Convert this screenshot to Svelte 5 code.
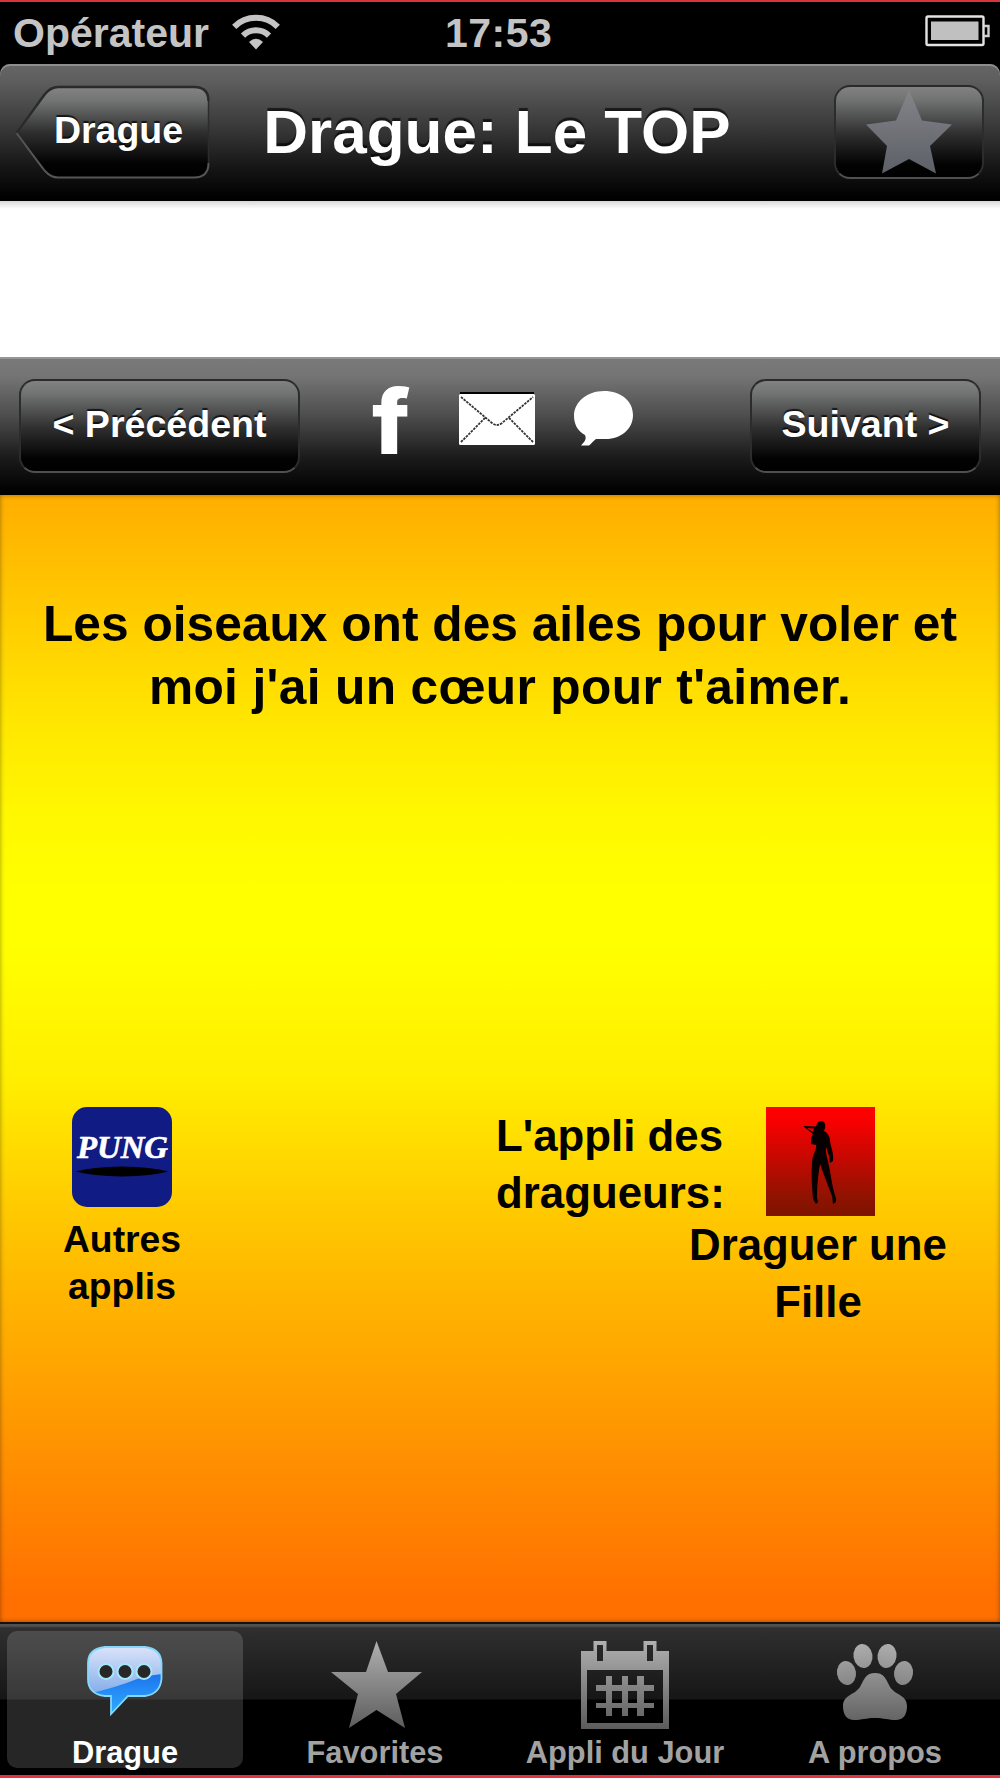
<script lang="ts">
	type Tab = { id: string; label: string };

	const tabs: Tab[] = [
		{ id: 'drague', label: 'Drague' },
		{ id: 'favorites', label: 'Favorites' },
		{ id: 'jour', label: 'Appli du Jour' },
		{ id: 'propos', label: 'A propos' }
	];

	let active = $state('drague');
</script>

<div class="phone">
	<div class="status">
		<span class="carrier">Opérateur</span>
		<svg class="wifi" width="50" height="38" viewBox="0 0 50 38">
			<g fill="none" stroke="#c4c4c4" stroke-width="6">
				<path d="M3.2 13.8 A31 31 0 0 1 46.8 13.8" />
				<path d="M12 22.6 A18.5 18.5 0 0 1 38 22.6" />
			</g>
			<path d="M18 29 Q25 22.500 32 29 L25 36.500 Z" fill="#c4c4c4" />
		</svg>
		<span class="time">17:53</span>
		<svg class="battery" width="66" height="32" viewBox="0 0 66 32">
			<rect x="1.500" y="1.500" width="57" height="28.500" rx="1.500" fill="none" stroke="#e4e4e4" stroke-width="2.400" />
			<path d="M59 11 H63.500 V21 H59" fill="none" stroke="#cfcfcf" stroke-width="2.400" />
			<rect x="6" y="6.500" width="47.500" height="18.500" fill="#c0c0c0" />
		</svg>
	</div>

	<header class="navbar">
		<button type="button" class="back">
			<svg width="195" height="95" viewBox="0 0 195 95">
				<defs>
					<linearGradient id="backFill" x1="0" y1="0" x2="0" y2="1">
						<stop offset="0" stop-color="#848484" />
						<stop offset="0.16" stop-color="#717272" />
						<stop offset="0.5" stop-color="#2f2f2f" />
						<stop offset="0.85" stop-color="#020202" />
						<stop offset="1" stop-color="#000" />
					</linearGradient>
					<linearGradient id="backEdge" x1="0" y1="0" x2="0" y2="1">
						<stop offset="0" stop-color="#2a2a2a" />
						<stop offset="0.5" stop-color="#242424" />
						<stop offset="0.56" stop-color="#444" />
						<stop offset="1" stop-color="#555" />
					</linearGradient>
				</defs>
				<path
					d="M1.500 48 C12 34 24 17 30 9 Q36 2 43 2 H179 Q193.500 2 193.500 16 V78 Q193.500 92.500 179 92.500 H43 Q36 92.500 30 86 C23 77 12 62 1.500 48 Z"
					fill="url(#backFill)"
				/>
				<path
					d="M1.500 48 C12 34 24 17 30 9 Q36 2 43 2 H179 Q193.500 2 193.500 16"
					fill="none"
					stroke="#2a2a2a"
					stroke-width="2.500"
				/>
				<path d="M193.500 16 V78" stroke="#2c2c2c" stroke-width="1.500" />
				<path
					d="M193.500 78 Q193.500 92.500 179 92.500 H43 Q36 92.500 30 86 C23 77 12 62 1.500 48"
					fill="none"
					stroke="#555"
					stroke-width="2"
				/>
			</svg>
			<span>Drague</span>
		</button>
		<h1>Drague: Le TOP</h1>
		<button type="button" class="btn star" aria-label="Favori">
			<svg width="88" height="86" viewBox="0 0 88 86">
				<defs>
					<linearGradient id="greyStar" x1="0" y1="0" x2="0" y2="1">
						<stop offset="0" stop-color="#838589" />
						<stop offset="1" stop-color="#5c5f66" />
					</linearGradient>
				</defs>
				<path d="M44 1 L57 31.500 L87 35.500 L65 57 L71 84.500 L44 70 L17 84.500 L22 57 L1 35.500 L31 31.500 Z" fill="url(#greyStar)" />
			</svg>
		</button>
	</header>

	<div class="ad"></div>

	<div class="toolbar">
		<button type="button" class="btn prev">&lt; Précédent</button>
		<div class="share">
			<svg class="facebook" width="40" height="110" viewBox="0 0 40 110">
				<text class="fb" x="1" y="97" textLength="38" lengthAdjust="spacingAndGlyphs">f</text>
			</svg>
			<svg class="mail" width="78" height="54" viewBox="0 0 78 54">
				<path d="M2 1 H76" stroke="#000" stroke-width="2" />
				<rect x="1" y="2" width="76" height="51" rx="1.500" fill="#fff" />
				<path
					d="M3 5 L34 31 Q39 35 44 31 L75 5 M3 50 L27 26 M75 50 L51 26"
					fill="none"
					stroke="#333"
					stroke-width="1.800"
					stroke-dasharray="2.500 1"
				/>
			</svg>
			<svg class="bubble" width="62" height="60" viewBox="0 0 62 60">
				<path
					d="M31 2 C48 2 60 12 60 26 C60 40 48 50 33 50 L23 50 C20 52 18 55 16 56.500 H8 C11 53 14 51 12 46 C4 42 1 34 1 27 C1 13 14 2 31 2 Z"
					fill="#fff"
				/>
			</svg>
		</div>
		<button type="button" class="btn next">Suivant &gt;</button>
	</div>

	<main>
		<p class="quote">
			Les oiseaux ont des ailes pour voler et<br /><span>moi j'ai un cœur pour t'aimer.</span>
		</p>

		<section class="promos">
			<div class="others">
				<svg width="100" height="100" viewBox="0 0 100 100">
					<rect width="100" height="100" rx="15" fill="#101c84" />
					<text class="pung" x="5" y="51" textLength="91" lengthAdjust="spacingAndGlyphs">PUNG</text>
					<path d="M4 64.500 Q20 60 50 59.500 Q80 60 96 64.500 Q80 69 50 69.500 Q20 69 4 64.500 Z" fill="#000" />
				</svg>
				<p>Autres<br />applis</p>
			</div>

			<div class="featured">
				<div class="row">
					<p>L'appli des<br />dragueurs:</p>
					<svg width="109" height="109" viewBox="0 0 109 109">
						<defs>
							<linearGradient id="redTile" x1="0" y1="0" x2="0" y2="1">
								<stop offset="0.08" stop-color="#f00" />
								<stop offset="0.45" stop-color="#c80800" />
								<stop offset="0.8" stop-color="#931200" />
								<stop offset="1" stop-color="#7d1200" />
							</linearGradient>
						</defs>
						<rect width="109" height="109" fill="url(#redTile)" />
						<path
							d="M37 19 L50 19.500 C51 15 54 13.500 56 14 C60 15 60 20 58 24 C62 26 64 30 64 34 C65 41 68 46 67 54 L64 56 L63 49 L60 40 C59 46 62 52 63 59 C65 68 66 80 70 91 L70 95 L67 97 L66 89 C62 78 57 66 54 57 C52 68 51 80 51 90 L52 95 L50 97 L47 92 C46 80 45 68 46 56 C46 48 51 43 50 38 L45 37 L45 31 L47 27 Z M41 21 L47 25 L48 21.500 Z"
							fill="#080000"
							fill-rule="evenodd"
						/>
					</svg>
				</div>
				<p class="caption">Draguer une<br />Fille</p>
			</div>
		</section>
	</main>

	<nav class="tabbar">
		{#each tabs as tab (tab.id)}
			<button type="button" class="tab" class:active={active === tab.id} onclick={() => (active = tab.id)}>
				<svg width="100" height="98" viewBox="0 0 100 98">
					<defs>
						<linearGradient id="tabGrey" gradientUnits="userSpaceOnUse" x1="0" y1="8" x2="0" y2="96">
							<stop offset="0" stop-color="#b0b0b0" />
							<stop offset="1" stop-color="#5c5c5c" />
						</linearGradient>
						<linearGradient id="chatTop" x1="0" y1="0" x2="0" y2="1">
							<stop offset="0" stop-color="#dce4fa" />
							<stop offset="0.65" stop-color="#88b0ea" />
							<stop offset="1" stop-color="#78b4ee" />
						</linearGradient>
						<linearGradient id="chatLow" x1="0" y1="0" x2="0" y2="1">
							<stop offset="0" stop-color="#1d74ee" />
							<stop offset="1" stop-color="#30b0ff" />
						</linearGradient>
						<clipPath id="chatClip">
							<path d="M18 14 H58 Q74 16 74.500 30 V46 Q73 61 58 63 H41 L24 81 V63 H18 Q1 61 1 46 V30 Q1 16 18 14 Z" />
						</clipPath>
					</defs>
					{#if tab.id === 'drague'}
						<g transform="translate(12)">
							<g clip-path="url(#chatClip)">
								<rect y="13" width="76" height="70" fill="url(#chatTop)" />
								<path d="M0 61 Q28 55 50 46 Q62 42 76 41 V84 H0 Z" fill="url(#chatLow)" />
							</g>
							<path
								d="M18 14 H58 Q74 16 74.500 30 V46 Q73 61 58 63 H41 L24 81 V63 H18 Q1 61 1 46 V30 Q1 16 18 14 Z"
								fill="none"
								stroke="#84d8fb"
								stroke-width="1.800"
							/>
							<g fill="#272727" stroke="#a5e6fb" stroke-width="2">
								<circle cx="19" cy="38.500" r="7.500" />
								<circle cx="38" cy="38.500" r="7.500" />
								<circle cx="57" cy="38.500" r="7.500" />
							</g>
						</g>
					{:else if tab.id === 'favorites'}
						<path
							d="M51.500 8 L63 39 H97 L71 61 L80 95 L51.500 77 L24 95 L33 61 L6 39 H41 Z"
							fill="url(#tabGrey)"
						/>
					{:else if tab.id === 'jour'}
						<g fill="url(#tabGrey)" fill-rule="evenodd">
							<path d="M6 18 H18.500 V8 H31.500 V18 H68.500 V8 H81.500 V18 H94 V96 H6 Z M12 37 V90 H88 V37 Z M22 12 V28 H28 V12 Z M72 12 V28 H78 V12 Z" />
							<path d="M31 43 H37 V52 H47 V43 H53 V52 H62 V43 H69 V52 H79 V58 H69 V70 H79 V75 H69 V83 H62 V75 H53 V83 H47 V75 H37 V83 H31 V75 H21 V70 H31 V58 H21 V52 H31 Z M37 58 V70 H47 V58 Z M53 58 V70 H62 V58 Z" />
						</g>
					{:else}
						<g fill="url(#tabGrey)">
							<ellipse cx="38" cy="23" rx="9.500" ry="12" transform="rotate(-8 38 23)" />
							<ellipse cx="62" cy="23" rx="9.500" ry="12" transform="rotate(8 62 23)" />
							<ellipse cx="21.500" cy="40" rx="9.500" ry="12" transform="rotate(-8 21.500 40)" />
							<ellipse cx="78.500" cy="40" rx="9.500" ry="12" transform="rotate(8 78.500 40)" />
							<path
								d="M50 40 C58 40 60 44 64 52 C68 62 82 61 82 73 C82 82 78 87 71 87 C63 87 59 85 50 85 C41 85 37 87 29 87 C22 87 18 82 18 73 C18 61 32 62 36 52 C40 44 42 40 50 40 Z"
							/>
						</g>
					{/if}
				</svg>
				<span>{tab.label}</span>
			</button>
		{/each}
	</nav>
</div>

<style>
	:global(body) {
		margin: 0;
		background: #000;
	}

	.phone {
		width: 1000px;
		height: 1778px;
		box-sizing: border-box;
		display: flex;
		flex-direction: column;
		overflow: hidden;
		background: #000;
		border-top: 2px solid #d8333c;
		border-bottom: 3px solid #e03540;
		font-family: 'Liberation Sans', Arial, sans-serif;
		font-weight: 700;
	}

	p,
	h1 {
		margin: 0;
	}

	button {
		padding: 0;
		border: 0;
		background: none;
		font: inherit;
		color: #fff;
	}

	svg {
		display: block;
		flex: none;
	}

	/* status bar */
	.status {
		height: 62px;
		box-sizing: border-box;
		padding: 0 9px 0 13px;
		display: flex;
		align-items: flex-start;
		color: #c4c4c4;
		font-size: 41px;
		line-height: 62px;
	}

	.carrier {
		width: 218px;
		white-space: nowrap;
	}

	.wifi {
		margin-top: 11px;
	}

	.time {
		margin-left: 164px;
		letter-spacing: 0.5px;
	}

	.battery {
		margin: 13px 0 0 auto;
	}

	/* navigation bar */
	.navbar {
		height: 137px;
		box-sizing: border-box;
		display: flex;
		align-items: flex-start;
		justify-content: space-between;
		padding: 21px 16px 0 15px;
		border-radius: 10px 10px 0 0;
		background: linear-gradient(#666 0, #5e5e5e 12%, #3a3a3a 45%, #161616 75%, #020202 96%, #000 100%);
		box-shadow: inset 0 2px 0 #8e8e8e;
	}

	.back {
		display: grid;
		width: 195px;
	}

	.back svg,
	.back span {
		grid-area: 1 / 1;
	}

	.back span {
		padding-left: 12px;
		font-size: 37.5px;
		line-height: 91px;
		text-shadow: 0 -2px 1px rgba(0, 0, 0, 0.75);
	}

	h1 {
		margin-right: 50px;
		color: #fff;
		font-size: 62px;
		line-height: 93px;
		white-space: nowrap;
		text-shadow: 0 -3px 1px rgba(0, 0, 0, 0.65);
	}

	.btn {
		height: 94px;
		box-sizing: border-box;
		border: 2px solid #333;
		border-color: #2a2a2a #2c2c2c #505050;
		border-radius: 16px;
		background: linear-gradient(#848484 0, #717272 16%, #2f2f2f 52%, #020202 85%, #000 100%) border-box;
		font-size: 37.6px;
		line-height: 86px;
		white-space: nowrap;
		text-shadow: 0 -2px 1px rgba(0, 0, 0, 0.75);
	}

	.star {
		width: 150px;
		padding-left: 29px;
	}

	/* empty banner slot */
	.ad {
		height: 156px;
		background: linear-gradient(#d8d8d8 0, #fff 8px);
	}

	/* toolbar */
	.toolbar {
		height: 138px;
		box-sizing: border-box;
		display: flex;
		align-items: flex-start;
		justify-content: space-between;
		padding: 22px 19px 0;
		background: linear-gradient(#7a7a7a 0, #747474 14%, #4e4e4e 42%, #1c1c1c 72%, #030303 95%, #000 100%);
		box-shadow: inset 0 2px 0 #969696;
	}

	.toolbar .btn {
		padding-bottom: 4px;
		line-height: 84px;
	}

	.prev {
		width: 281px;
	}

	.next {
		width: 231px;
	}

	.share {
		display: flex;
		align-items: flex-start;
		width: 264px;
		margin-right: 44px;
	}

	.facebook {
		margin-top: -22px;
	}

	.fb {
		font-family: Inter, 'Liberation Sans', sans-serif;
		font-size: 90px;
		font-weight: 800;
		fill: #fff;
	}

	.mail {
		margin: 13px 0 0 47px;
	}

	.bubble {
		margin: 10px 0 0 37px;
	}

	/* content */
	main {
		height: 1127px;
		box-sizing: border-box;
		padding-top: 98px;
		background: linear-gradient(
			#ffae00 0,
			#ffc400 8%,
			#ffe600 20%,
			#fff700 28%,
			#ff0 35%,
			#ff0 40%,
			#ffee00 52%,
			#ffc800 64%,
			#ffb000 73%,
			#ff7000 98%
		);
		box-shadow: inset 0 0 5px rgba(0, 0, 0, 0.4);
		color: #000;
	}

	.quote {
		height: 514px;
		font-size: 49.7px;
		line-height: 62.5px;
		text-align: center;
	}

	.quote span {
		letter-spacing: 0.35px;
	}

	.promos {
		display: flex;
		justify-content: space-between;
		align-items: flex-start;
		padding: 0 49px 0 52px;
	}

	.others {
		width: 140px;
		display: flex;
		flex-direction: column;
		align-items: center;
		font-size: 37.3px;
		line-height: 47px;
		text-align: center;
	}

	.others p {
		margin-top: 9px;
	}

	.pung {
		font-family: 'Liberation Serif', serif;
		font-size: 31px;
		font-style: italic;
		font-weight: 700;
		fill: #fff;
		stroke: #fff;
		stroke-width: 0.6px;
	}

	.featured {
		width: 458px;
		font-size: 43.8px;
		line-height: 56.5px;
	}

	.row {
		display: flex;
		justify-content: space-between;
		align-items: flex-start;
		height: 109px;
		padding-right: 76px;
		padding-left: 3px;
	}

	.row p {
		padding-top: 1px;
	}

	.caption {
		padding-top: 1px;
		padding-left: 192px;
		text-align: center;
	}

	/* tab bar */
	.tabbar {
		flex: 1;
		display: flex;
		border-top: 2px solid #111;
		background: linear-gradient(#505050 0, #505050 2px, #2f2f2f 4px, #161616 75px, #000 76px);
	}

	.tab {
		width: 236px;
		height: 137px;
		margin: 7px 7px 0;
		display: flex;
		flex-direction: column;
		align-items: center;
		border-radius: 10px;
		color: #a2a2a2;
		font-size: 30.8px;
		line-height: 36px;
		white-space: nowrap;
	}

	.tab svg {
		margin-top: 2px;
	}

	.tab span {
		margin-top: 4px;
	}

	.tab.active {
		background: rgba(255, 255, 255, 0.15);
		color: #fff;
	}
</style>
